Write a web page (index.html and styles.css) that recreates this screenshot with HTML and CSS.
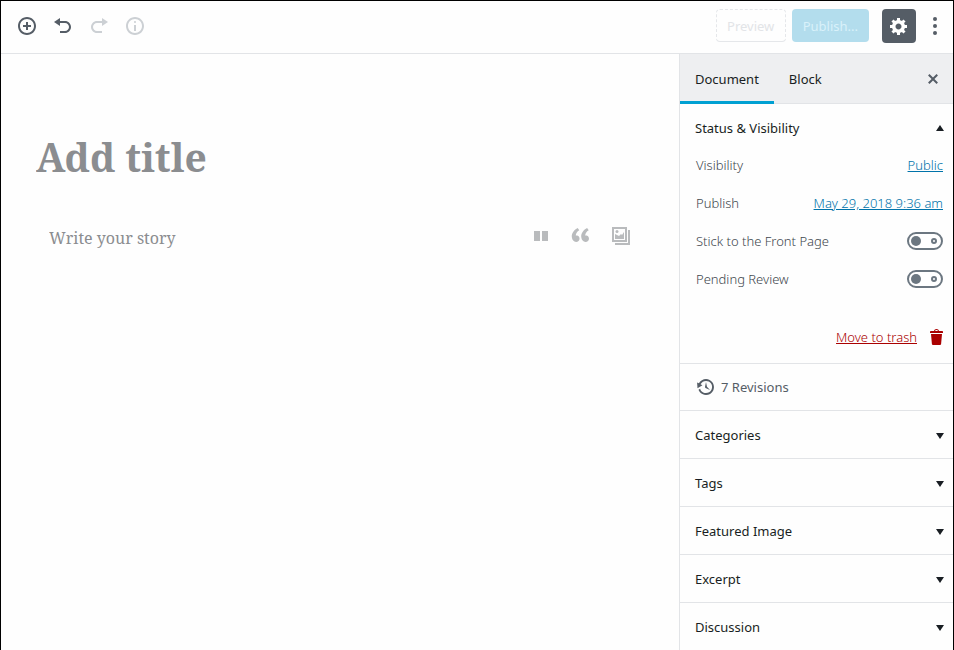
FILE: index.html
```html
<!DOCTYPE html>
<html lang="en">
<head>
    <meta charset="UTF-8">
    <meta name="viewport" content="width=device-width, initial-scale=1.0">
    <title>Add New Post</title>
    <link rel="stylesheet" href="styles.css">
</head>
<body>
    <header class="header">
        <div class="toolbar">
            <button class="icon-button" aria-label="Add block">
                <svg viewBox="0 0 20 20"><path d="M10 1c-5 0-9 4-9 9s4 9 9 9 9-4 9-9-4-9-9-9zm0 16c-3.9 0-7-3.1-7-7s3.1-7 7-7 7 3.1 7 7-3.1 7-7 7zM11 6H9v3H6v2h3v3h2v-3h3V9h-3z"/></svg>
            </button>
            <button class="icon-button" aria-label="Undo">
                <svg viewBox="0 0 20 20"><path d="M12 5H7V2L1 6l6 4V7h5c2.2 0 4 1.8 4 4s-1.8 4-4 4H7v2h5c3.3 0 6-2.7 6-6s-2.7-6-6-6z"/></svg>
            </button>
            <button class="icon-button" aria-label="Redo" disabled>
                <svg viewBox="0 0 20 20"><path d="M8 5h5V2l6 4-6 4V7H8c-2.2 0-4 1.8-4 4s1.8 4 4 4h5v2H8c-3.3 0-6-2.7-6-6s2.7-6 6-6z"/></svg>
            </button>
            <button class="icon-button" aria-label="Content structure" disabled>
                <svg viewBox="0 0 20 20"><path d="M9 15h2V9H9v6zm1-10c-.5 0-1 .5-1 1s.5 1 1 1 1-.5 1-1-.5-1-1-1zm0-4c-5 0-9 4-9 9s4 9 9 9 9-4 9-9-4-9-9-9zm0 16c-3.9 0-7-3.1-7-7s3.1-7 7-7 7 3.1 7 7-3.1 7-7 7z"/></svg>
            </button>
        </div>
        <div class="settings">
            <button class="button preview" disabled>Preview</button>
            <button class="button publish" disabled>Publish...</button>
            <button class="gear" aria-label="Settings">
                <svg viewBox="0 0 20 20"><path d="M18 12h-2.18c-.17.7-.44 1.35-.81 1.93l1.54 1.54-2.1 2.1-1.54-1.54c-.58.36-1.23.63-1.91.79V19H8v-2.18c-.68-.16-1.33-.43-1.91-.79l-1.54 1.54-2.12-2.12 1.54-1.54c-.36-.58-.63-1.23-.79-1.91H1V9.03h2.17c.16-.7.44-1.35.8-1.94L2.43 5.55l2.1-2.1 1.54 1.54c.58-.37 1.24-.64 1.93-.81V2h3v2.18c.68.16 1.33.43 1.91.79l1.54-1.54 2.12 2.12-1.54 1.54c.36.59.64 1.24.8 1.94H18V12zm-8.5 1.5c1.66 0 3-1.34 3-3s-1.34-3-3-3-3 1.34-3 3 1.34 3 3 3z"/></svg>
            </button>
            <button class="icon-button" aria-label="More">
                <svg viewBox="0 0 20 20"><circle cx="10" cy="3" r="2"/><circle cx="10" cy="10" r="2"/><circle cx="10" cy="17" r="2"/></svg>
            </button>
        </div>
    </header>

    <div class="layout">
        <main class="editor">
            <input class="post-title" type="text" placeholder="Add title" aria-label="Add title">
            <div class="appender">
                <input class="story" type="text" placeholder="Write your story" aria-label="Write your story">
                <div class="inserter">
                    <button aria-label="Columns">
                        <svg viewBox="0 0 20 20"><path d="M3 5h6v10H3zM11 5h6v10h-6z"/></svg>
                    </button>
                    <button aria-label="Quote">
                        <svg viewBox="0 0 20 20"><path d="M8.54 12.74c0-.87-.24-1.61-.72-2.22-.73-.92-2.14-1.03-2.96-.85-.34-1.93 1.3-4.39 3.42-5.45L6.65 1.94C3.45 3.46.31 6.96.85 11.37 1.19 14.16 2.8 16 5.08 16c1 0 1.83-.29 2.48-.88.66-.59.98-1.38.98-2.38zm9.43 0c0-.87-.24-1.61-.72-2.22-.73-.92-2.14-1.03-2.96-.85-.34-1.93 1.3-4.39 3.42-5.45l-1.63-2.28c-3.2 1.52-6.34 5.02-5.8 9.43.34 2.79 1.95 4.63 4.23 4.63 1 0 1.83-.29 2.48-.88.66-.59.98-1.38.98-2.38z"/></svg>
                    </button>
                    <button aria-label="Gallery">
                        <svg viewBox="0 0 20 20"><path fill-rule="evenodd" d="M1 1h15v15H1zM3 3v11h11V3zM17 4h2v15H4v-2h13z"/><path d="M4 13V8l2 1 2 1 2-2 1 1 2-3v7z"/><circle cx="6" cy="5.500" r="1.500"/></svg>
                    </button>
                </div>
            </div>
        </main>

        <aside class="sidebar">
            <div class="tabs">
                <button class="tab active">Document</button>
                <button class="tab">Block</button>
                <button class="close" aria-label="Close settings">
                    <svg viewBox="0 0 20 20"><path d="M14.950 6.460L11.410 10l3.540 3.540-1.410 1.410L10 11.420l-3.530 3.530-1.420-1.420L8.580 10 5.050 6.470l1.420-1.420L10 8.580l3.540-3.530z"/></svg>
                </button>
            </div>

            <section class="panel">
                <button class="panel-toggle" aria-expanded="true">Status &amp; Visibility
                    <svg viewBox="0 0 8 6"><path d="M4 0l4 6H0z"/></svg>
                </button>
                <div class="panel-body">
                    <div class="row"><span>Visibility</span><a href="#">Public</a></div>
                    <div class="row"><span>Publish</span><a href="#">May 29, 2018 9:36 am</a></div>
                    <div class="row">
                        <label for="sticky">Stick to the Front Page</label>
                        <input class="switch" id="sticky" type="checkbox">
                    </div>
                    <div class="row">
                        <label for="pending">Pending Review</label>
                        <input class="switch" id="pending" type="checkbox">
                    </div>
                    <a class="trash" href="#"><span>Move to trash</span>
                        <svg viewBox="3 2 13 16"><path fill-rule="evenodd" d="M12 4h3c.6 0 1 .4 1 1v1H3V5c0-.6.5-1 1-1h3c.2-1.1 1.300-2 2.500-2s2.300.9 2.500 2zM8 4h3c-.2-.6-.9-1-1.500-1S8.200 3.400 8 4zM4 7h11l-.9 10.100c0 .5-.5.9-1 .9H5.900c-.5 0-.9-.4-1-.9L4 7z"/></svg>
                    </a>
                </div>
            </section>

            <section class="panel">
                <a class="revisions" href="#">
                    <svg viewBox="0 0 20 20"><path d="M13.650 2.880c3.930 2.010 5.480 6.840 3.470 10.770s-6.830 5.480-10.770 3.470c-1.870-.96-3.200-2.560-3.860-4.400l1.640-1.030c.45 1.570 1.520 2.950 3.080 3.760 3.010 1.540 6.690.35 8.230-2.660 1.550-3.010.36-6.690-2.650-8.240C9.780 3.010 6.100 4.200 4.560 7.210l1.880.97-4.950 3.080-.39-5.820 1.780.91C4.900 2.400 9.750.89 13.650 2.880zm-4.360 7.830C9.110 10.530 9 10.280 9 10c0-.07.03-.12.04-.19h-.01L10 5l.97 4.810L14 13l-4.500-2.120.02-.02c-.08-.04-.16-.09-.23-.15z"/></svg>
                    7 Revisions
                </a>
            </section>

            <section class="panel">
                <button class="panel-toggle" aria-expanded="false">Categories
                    <svg viewBox="0 0 8 6"><path d="M0 0h8L4 6z"/></svg>
                </button>
            </section>
            <section class="panel">
                <button class="panel-toggle" aria-expanded="false">Tags
                    <svg viewBox="0 0 8 6"><path d="M0 0h8L4 6z"/></svg>
                </button>
            </section>
            <section class="panel">
                <button class="panel-toggle" aria-expanded="false">Featured Image
                    <svg viewBox="0 0 8 6"><path d="M0 0h8L4 6z"/></svg>
                </button>
            </section>
            <section class="panel">
                <button class="panel-toggle" aria-expanded="false">Excerpt
                    <svg viewBox="0 0 8 6"><path d="M0 0h8L4 6z"/></svg>
                </button>
            </section>
            <section class="panel">
                <button class="panel-toggle" aria-expanded="false">Discussion
                    <svg viewBox="0 0 8 6"><path d="M0 0h8L4 6z"/></svg>
                </button>
            </section>
        </aside>
    </div>
</body>
</html>
```
FILE: styles.css
```css
*,
*::before,
*::after {
    box-sizing: border-box;
}
body {
    margin: 0;
    min-height: 100vh;
    display: flex;
    flex-direction: column;
    border: 1px solid #000;
    border-bottom: none;
    background: #fefefe;
    color: #191e23;
    font-family: "Segoe UI", "Noto Sans", sans-serif;
    font-size: 13px;
    line-height: 18px;
}
button {
    padding: 0;
    border: none;
    background: none;
    color: inherit;
    font: inherit;
    cursor: pointer;
}
button:disabled {
    cursor: default;
}
svg {
    display: block;
    width: 20px;
    height: 20px;
    fill: currentColor;
}

/* Header */
.header {
    display: flex;
    justify-content: space-between;
    padding: 8px 0 10px 8px;
    border-bottom: 1px solid #e2e4e7;
}
.toolbar,
.settings {
    display: flex;
}
.icon-button {
    width: 36px;
    height: 34px;
    padding: 7px 8px;
    color: #555d66;
}
.icon-button:disabled {
    color: #ccd0d4;
}
.button {
    height: 33px;
    padding: 0 10px;
    margin-right: 6px;
    border: 1px solid transparent;
    border-radius: 4px;
}
.preview {
    min-width: 70px;
    border: 1px dashed #e5e7ea;
    border-bottom-style: solid;
    color: #e2e4e7;
}
.publish {
    min-width: 77px;
    background: #b3dded;
    color: #d9f1fa;
}
.gear {
    width: 34px;
    height: 34px;
    margin: 0 1px 0 7px;
    padding: 7px;
    border-radius: 4px;
    background: #555d66;
    color: #fff;
}

/* Editor */
.layout {
    flex: 1;
    display: flex;
}
.editor {
    flex: 1;
    min-width: 0;
    padding: 72px 48px 0 35px;
}
.post-title,
.story {
    display: block;
    width: 100%;
    padding: 0;
    border: none;
    outline: none;
    background: none;
    color: #191e23;
    font-family: "Noto Serif", "DejaVu Serif", serif;
}
.post-title {
    height: 60px;
    font-size: 39px;
    font-weight: bold;
}
.story {
    flex: 1;
    min-width: 0;
    height: 28px;
    font-size: 16px;
}
.post-title::placeholder,
.story::placeholder {
    color: #8b8d90;
    opacity: 1;
}
.appender {
    display: flex;
    align-items: center;
    margin-top: 38px;
    padding-left: 13px;
}
.inserter {
    display: flex;
    gap: 20px;
    padding-bottom: 4px;
    color: #b9bbbd;
}

/* Sidebar */
.sidebar {
    width: 274px;
    border-left: 1px solid #e2e4e7;
}
.tabs {
    display: flex;
    height: 50px;
    border-bottom: 1px solid #e2e4e7;
    background: #eeeff1;
}
.tab {
    height: 50px;
    padding: 3px 15px 0;
    border-bottom: 3px solid transparent;
}
.tab.active {
    border-color: #00a0d2;
}
.close {
    margin-left: auto;
    padding: 0 10px;
    color: #555d66;
}
.panel {
    border-bottom: 1px solid #e2e4e7;
}
.panel:last-child {
    border-bottom: none;
}
.panel-toggle {
    display: flex;
    align-items: center;
    justify-content: space-between;
    width: 100%;
    height: 47px;
    padding: 1px 9px 0 15px;
}
.panel-toggle svg {
    width: 8px;
    height: 6px;
}
.panel-toggle[aria-expanded="false"] svg {
    margin-top: 2px;
}
.panel-body {
    display: flex;
    flex-direction: column;
    gap: 20px;
    padding: 5px 10px 17px 16px;
    color: #555d66;
    font-weight: 300;
}
.row {
    display: flex;
    align-items: center;
    justify-content: space-between;
}
.row span,
.row label {
    color: #40464d;
}
.row a {
    color: #0073aa;
}
.switch {
    appearance: none;
    display: flex;
    align-items: center;
    justify-content: space-between;
    width: 36px;
    height: 18px;
    margin: 0;
    padding: 0 4px 0 2px;
    border: 2px solid #6c7781;
    border-radius: 9px;
    background: #fff;
}
.switch::before {
    content: "";
    width: 10px;
    height: 10px;
    border-radius: 50%;
    background: #6c7781;
}
.switch::after {
    content: "";
    width: 6px;
    height: 6px;
    border: 2px solid #6c7781;
    border-radius: 50%;
}
.trash {
    display: flex;
    align-items: center;
    align-self: flex-end;
    gap: 13px;
    margin-top: 20px;
    color: #a00;
    text-decoration: none;
}
.trash span {
    text-decoration: underline;
}
.trash svg {
    width: 13px;
    height: 16px;
}
.revisions {
    display: flex;
    align-items: center;
    gap: 5px;
    height: 46px;
    padding: 0 16px;
    color: #555d66;
    text-decoration: none;
}
```
